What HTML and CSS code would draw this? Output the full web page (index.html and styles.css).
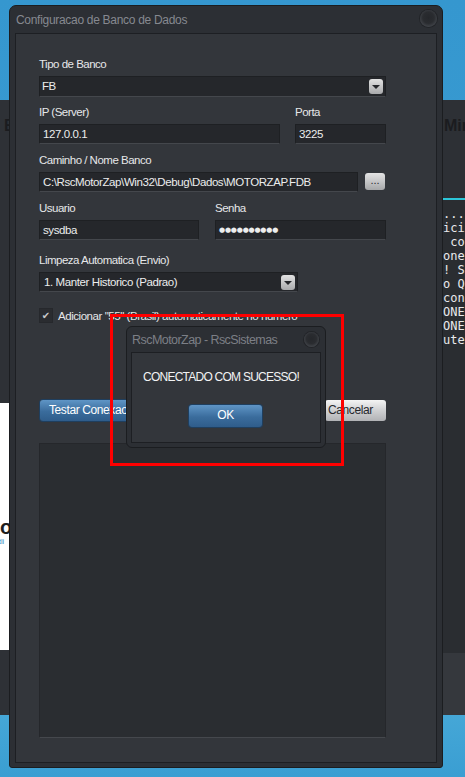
FILE: index.html
```html
<!DOCTYPE html>
<html>
<head lang="pt">
    <meta charset="UTF-8">
    <title>Configuracao de Banco de Dados</title>
    <link rel="stylesheet" href="styles.css">
</head>
<body>
<div class="desktop">
    <div class="backapp">
        <div class="side-left">
            <div class="left-top"><span class="head-text">E</span></div>
            <div class="left-white">
                <span class="logo-big">co</span>
                <span class="logo-sub">tli</span>
            </div>
            <div class="left-bottom"></div>
        </div>
        <div class="middle"></div>
        <div class="side-right">
            <div class="right-top"><span class="head-text">Min</span></div>
            <div class="console">
                <div class="line">... aguardando</div>
                <div class="line">iciando servico</div>
                <div class="line"> conectando</div>
                <div class="line">onexao aberta</div>
                <div class="line">! Sucesso</div>
                <div class="line">o QR Code</div>
                <div class="line">conectado</div>
                <div class="line">ONECTADO</div>
                <div class="line">ONECTADO</div>
                <div class="line">utenticado</div>
            </div>
            <div class="right-bottom"></div>
        </div>
    </div>

    <div class="window">
        <div class="titlebar">
            <span class="title">Configuracao de Banco de Dados</span>
            <span class="knob"></span>
        </div>
        <div class="panel">
            <div class="field">
                <label>Tipo de Banco</label>
                <div class="select select-tipo">FB<span class="arrow"></span></div>
            </div>

            <div class="row row-ip">
                <div class="field f-ip">
                    <label>IP (Server)</label>
                    <div class="input">127.0.0.1</div>
                </div>
                <div class="field f-porta">
                    <label>Porta</label>
                    <div class="input">3225</div>
                </div>
            </div>

            <div class="field f-caminho">
                <label>Caminho / Nome Banco</label>
                <div class="row row-path">
                    <div class="input input-path">C:\RscMotorZap\Win32\Debug\Dados\MOTORZAP.FDB</div>
                    <span class="btn-dots">...</span>
                </div>
            </div>

            <div class="row row-user">
                <div class="field f-user">
                    <label>Usuario</label>
                    <div class="input">sysdba</div>
                </div>
                <div class="field f-senha">
                    <label>Senha</label>
                    <div class="input input-pass">●●●●●●●●●●</div>
                </div>
            </div>

            <div class="field f-limpeza">
                <label>Limpeza Automatica (Envio)</label>
                <div class="select select-limpeza">1. Manter Historico (Padrao)<span class="arrow"></span></div>
            </div>

            <div class="check-row">
                <span class="checkbox">✔</span>
                <span class="check-label">Adicionar "55" (Brasil) automaticamente no numero</span>
            </div>

            <div class="btn-row">
                <span class="btn btn-blue btn-test">Testar Conexao</span>
                <span class="btn btn-gray">Cancelar</span>
            </div>

            <div class="log"></div>
        </div>
    </div>

    <div class="dialog">
        <div class="titlebar dlg-titlebar">
            <span class="title dlg-title">RscMotorZap - RscSistemas</span>
            <span class="knob knob-small"></span>
        </div>
        <div class="dlg-body">
            <p class="dlg-msg">CONECTADO COM SUCESSO!</p>
            <span class="btn btn-blue btn-ok">OK</span>
        </div>
    </div>

    <div class="highlight"></div>
</div>
</body>
</html>
```

FILE: styles.css
```css
* {
    margin: 0;
    padding: 0;
    box-sizing: border-box;
}

body {
    width: 465px;
    height: 777px;
    overflow: hidden;
    font-family: "Liberation Sans", Arial, sans-serif;
    font-size: 11px;
}

.desktop {
    position: relative;
    width: 465px;
    height: 777px;
    padding-top: 100px;
    background: linear-gradient(to bottom, #3597cf 0%, #3a9cd2 40%, #45a7d7 92%, #3a9ed2 100%);
}

/* app behind the modal */
.backapp {
    height: 615px;
    display: grid;
    grid-template-columns: 9px 1fr 22px;
}

.side-left,
.side-right {
    display: flex;
    flex-direction: column;
    overflow: hidden;
}

.left-top {
    height: 303px;
    background: #2e3136;
    padding: 17px 0 0 4px;
}

.head-text {
    display: block;
    font-weight: bold;
    font-size: 16px;
    line-height: 18px;
    color: #1b1c1f;
    white-space: nowrap;
}

.left-white {
    height: 247px;
    background: #fff;
    padding-top: 116px;
}

.logo-big {
    display: block;
    margin-left: -11px;
    font-weight: bold;
    font-size: 20px;
    line-height: 17px;
    color: #1e1e1e;
    white-space: nowrap;
}

.logo-sub {
    display: block;
    margin: 2px 0 0 -1px;
    font-size: 7px;
    line-height: 8px;
    color: #2c86c0;
    white-space: nowrap;
}

.left-bottom {
    flex: 1;
    background: #2e3136;
}

.right-top {
    height: 100px;
    background: #2d3035;
    padding: 17px 0 0 1px;
    border-bottom: 2px solid #2cc6d9;
}

.console {
    height: 453px;
    background: #2a2d31;
    padding-top: 7px;
    font-family: "DejaVu Sans Mono", "Liberation Mono", monospace;
    font-size: 12px;
    line-height: 14px;
    color: #e9eaec;
}

.console .line {
    white-space: pre;
}

.right-bottom {
    flex: 1;
    background: #35383d;
}

/* modal window */
.window {
    position: absolute;
    left: 9px;
    top: 5px;
    width: 434px;
    height: 763px;
    border: 1px solid #1b1d20;
    border-radius: 7px 7px 3px 3px;
    background: #2c2f34;
    padding: 0 5px 4px;
    display: flex;
    flex-direction: column;
}

.titlebar {
    height: 27px;
    display: flex;
    align-items: center;
    justify-content: space-between;
    padding-left: 1px;
}

.title {
    font-size: 12px;
    letter-spacing: -0.3px;
    color: #868990;
}

.knob {
    width: 17px;
    height: 17px;
    margin-top: -2px;
    border-radius: 50%;
    background: radial-gradient(circle at 50% 45%, #25272b 0%, #2a2c30 45%, #3e4146 70%, #50535a 100%);
    box-shadow: 0 0 0 1px #222428;
}

.panel {
    flex: 1;
    border: 1px solid #1d1f23;
    background: #33363b;
    padding: 23px 0 0 23px;
    color: #e6e7e9;
}

.field label {
    display: block;
    height: 14px;
    line-height: 14px;
    font-size: 11.5px;
    letter-spacing: -0.5px;
    margin-bottom: 5px;
}

.input,
.select {
    position: relative;
    height: 20px;
    line-height: 18px;
    padding-left: 3px;
    background: #25272b;
    border: 1px solid #1e2023;
    border-bottom-color: #44474c;
    color: #eceded;
    white-space: nowrap;
    overflow: hidden;
    font-size: 11.5px;
    letter-spacing: -0.4px;
}

.select-tipo {
    width: 347px;
    height: 21px;
    line-height: 19px;
    padding-left: 2px;
}

.arrow {
    position: absolute;
    right: 2px;
    top: 2px;
    width: 14px;
    height: 15px;
    border-radius: 3px;
    background: linear-gradient(to bottom, #e2e2e2, #a9aaac);
}

.arrow::after {
    content: "";
    position: absolute;
    left: 3px;
    top: 6px;
    border-left: 4px solid transparent;
    border-right: 4px solid transparent;
    border-top: 4px solid #25272b;
}

.row {
    display: flex;
}

.row-ip {
    gap: 15px;
    margin-top: 8px;
}

.f-ip {
    width: 241px;
}

.f-porta {
    width: 91px;
}

.f-caminho {
    margin-top: 9px;
}

.row-path {
    align-items: center;
    gap: 7px;
}

.input-path {
    width: 319px;
}

.btn-dots {
    width: 20px;
    height: 17px;
    margin-top: -1px;
    border-radius: 3px;
    background: linear-gradient(to bottom, #e4e4e4, #a7a8aa);
    color: #2c2e33;
    text-align: center;
    line-height: 15px;
    font-size: 11px;
}

.row-user {
    gap: 16px;
    margin-top: 9px;
}

.f-user {
    width: 160px;
}

.f-senha {
    width: 171px;
}

.input-pass {
    font-family: "DejaVu Sans", sans-serif;
    font-size: 7px;
    letter-spacing: -0.2px;
    line-height: 18px;
    padding-left: 3px;
}

.f-limpeza {
    margin-top: 13px;
}

.select-limpeza {
    width: 259px;
    padding-left: 4px;
}

.check-row {
    display: flex;
    align-items: center;
    gap: 5px;
    margin-top: 16px;
    height: 15px;
}

.checkbox {
    width: 14px;
    height: 15px;
    background: #2a2c30;
    border: 1px solid #26282c;
    color: #c8c9cb;
    font-family: "DejaVu Sans", sans-serif;
    font-size: 10px;
    line-height: 13px;
    text-align: center;
}

.check-label {
    font-size: 11.5px;
    letter-spacing: -0.45px;
    white-space: nowrap;
}

.btn-row {
    display: flex;
    justify-content: space-between;
    width: 347px;
    margin-top: 77px;
    padding-left: 1px;
}

.btn {
    height: 21px;
    line-height: 20px;
    border-radius: 3px;
    font-size: 12px;
    letter-spacing: -0.4px;
}

.btn-blue {
    background: linear-gradient(to bottom, #5f95c6, #3a6c9c 55%, #2f5d8b);
    color: #fff;
    box-shadow: 0 0 0 1px #1f3f5f;
}

.btn-test {
    width: 110px;
    padding-left: 9px;
}

.btn-gray {
    width: 61px;
    padding-left: 3px;
    background: linear-gradient(to bottom, #f4f4f4, #cfd0d2 50%, #b1b2b5);
    color: #26282c;
}

.log {
    width: 347px;
    height: 295px;
    margin-top: 22px;
    background: #2a2d31;
    border: 1px solid #25272b;
    border-bottom-color: #45484d;
}

/* message box on top */
.dialog {
    position: absolute;
    left: 126px;
    top: 326px;
    width: 200px;
    height: 122px;
    border: 1px solid #1b1d20;
    border-radius: 6px;
    background: #2c2f34;
    padding: 0 4px 4px;
    display: flex;
    flex-direction: column;
}

.dlg-titlebar {
    height: 25px;
    padding-right: 2px;
}

.dlg-title {
    font-size: 12.5px;
    letter-spacing: -0.55px;
    color: #7c7f86;
}

.knob-small {
    width: 15px;
    height: 15px;
    margin-top: 0;
}

.dlg-body {
    flex: 1;
    border: 1px solid #1d1f23;
    background: #33363b;
    padding: 17px 0 0 11px;
    display: flex;
    flex-direction: column;
}

.dlg-msg {
    height: 14px;
    line-height: 14px;
    font-size: 12px;
    letter-spacing: -0.75px;
    color: #f2f3f4;
}

.btn-ok {
    align-self: flex-start;
    width: 73px;
    height: 22px;
    line-height: 21px;
    margin: 21px 0 0 46px;
    text-align: center;
    font-size: 12px;
}

.highlight {
    position: absolute;
    left: 110px;
    top: 314px;
    width: 234px;
    height: 152px;
    border: 3px solid #ff0000;
}
```
